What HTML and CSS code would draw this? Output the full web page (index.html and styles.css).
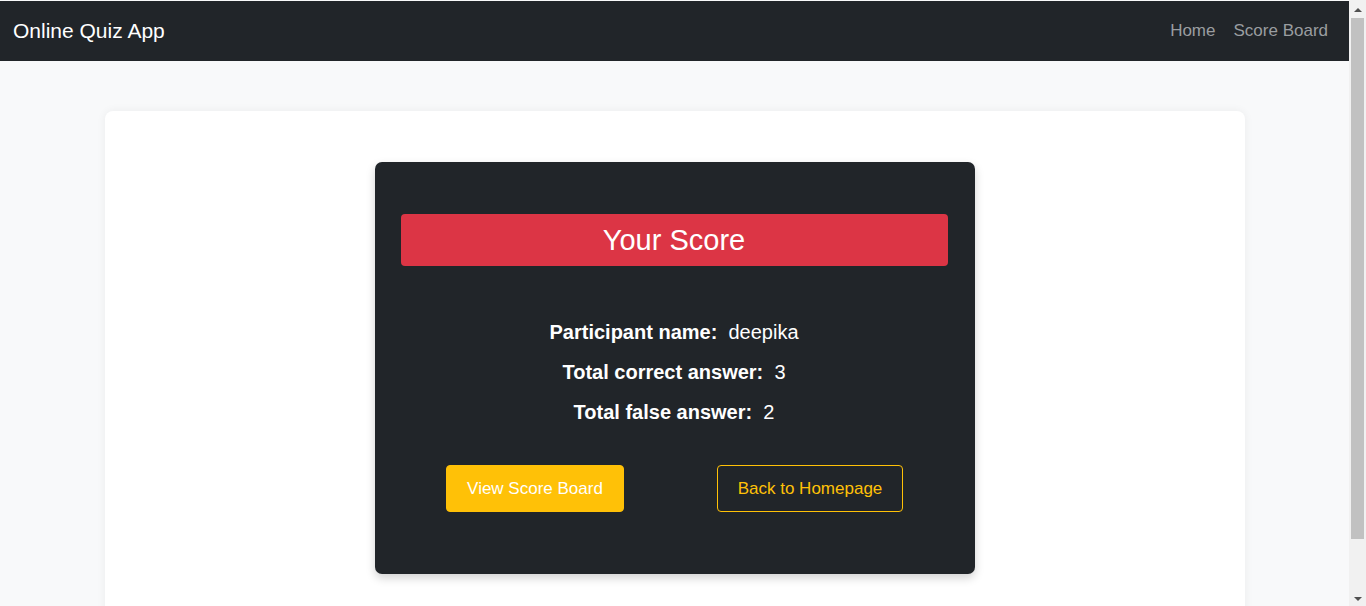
FILE: index.html
```html
<!DOCTYPE html>
<html lang="en">
<head>
<meta charset="utf-8">
<title>Online Quiz App</title>
<link rel="stylesheet" href="styles.css">
</head>
<body>
<nav class="navbar">
  <a class="brand" href="#">Online Quiz App</a>
  <div class="nav-links">
    <a class="nav-link" href="#">Home</a>
    <a class="nav-link" href="#">Score Board</a>
  </div>
</nav>
<main class="main">
  <div class="container">
    <div class="score-card">
      <h3 class="score-title">Your Score</h3>
      <div class="score-lines">
        <p class="score-line"><strong>Participant name:</strong>&nbsp; deepika</p>
        <p class="score-line"><strong>Total correct answer:</strong>&nbsp; 3</p>
        <p class="score-line"><strong>Total false answer:</strong>&nbsp; 2</p>
      </div>
      <div class="actions">
        <a class="btn btn-warning" href="#">View Score Board</a>
        <a class="btn btn-outline" href="#">Back to Homepage</a>
      </div>
    </div>
  </div>
</main>
<div class="scrollbar" aria-hidden="true">
  <span class="sb-arrow sb-up"></span>
  <span class="sb-thumb"></span>
  <span class="sb-arrow sb-down"></span>
</div>
</body>
</html>
```
FILE: styles.css
```css
* { box-sizing: border-box; }
html, body {
  margin: 0;
  background: #f8f9fa;
  font-family: "Liberation Sans", Arial, sans-serif;
}
body {
  margin-right: 17px;
}
a { text-decoration: none; }

.navbar {
  margin-top: 1px;
  height: 60px;
  background: #212529;
  display: flex;
  align-items: center;
  justify-content: space-between;
  padding: 0 12px 0 13px;
}
.brand {
  color: #fff;
  font-size: 21px;
  line-height: 1.5;
}
.nav-links {
  display: flex;
}
.nav-link {
  color: #9a9da0;
  font-size: 17px;
  padding: 0 9px;
  line-height: 1.5;
}

.main {
  padding: 50px 0 40px;
}
.container {
  width: 1140px;
  margin: 0 auto;
  background: #fff;
  border-radius: 8px;
  box-shadow: 0 0 10px rgba(0, 0, 0, 0.06);
  padding: 51px 0;
}
.score-card {
  width: 600px;
  margin: 0 auto;
  background: #212529;
  border-radius: 7px;
  box-shadow: 0 4px 10px rgba(0, 0, 0, 0.18);
  padding: 52px 27px 62px 26px;
}
.score-title {
  margin: 0;
  height: 52px;
  line-height: 52px;
  background: #dc3545;
  border-radius: 4px;
  color: #fff;
  font-size: 29px;
  font-weight: 400;
  text-align: center;
}
.score-lines {
  margin-top: 54px;
  display: flex;
  flex-direction: column;
  gap: 16px;
}
.score-line {
  margin: 0;
  color: #fff;
  font-size: 20px;
  line-height: 24px;
  text-align: center;
}
.actions {
  margin-top: 41px;
  margin-left: -3px;
  display: grid;
  grid-template-columns: 1fr 1fr;
  justify-items: center;
}
.btn {
  display: inline-block;
  font-size: 17px;
  line-height: 25px;
  padding: 10px 20px;
  border: 1px solid #ffc107;
  border-radius: 4px;
}
.btn-warning {
  background: #ffc107;
  color: #fff;
}
.btn-outline {
  background: transparent;
  color: #ffc107;
}

/* simulated browser scrollbar */
.scrollbar {
  position: fixed;
  top: 0;
  right: 0;
  bottom: 0;
  width: 17px;
  background: #f1f1f1;
  display: flex;
  flex-direction: column;
  align-items: center;
}
.sb-arrow {
  width: 0;
  height: 0;
  border-left: 4px solid transparent;
  border-right: 4px solid transparent;
}
.sb-up {
  margin-top: 8px;
  border-bottom: 4px solid #505050;
}
.sb-thumb {
  margin-top: 6px;
  width: 13px;
  height: 521px;
  background: #c1c1c1;
}
.sb-down {
  margin-top: auto;
  margin-bottom: 5px;
  border-top: 4px solid #505050;
}
```
